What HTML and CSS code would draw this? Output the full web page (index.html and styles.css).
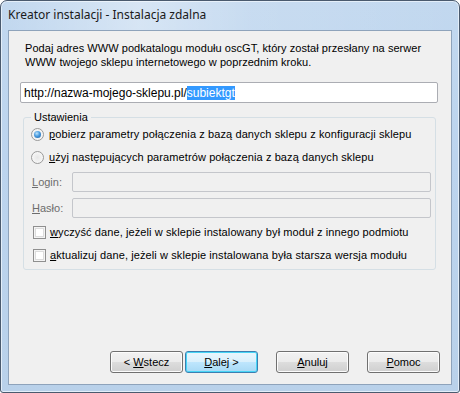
FILE: index.html
```html
<!DOCTYPE html>
<html lang="pl">
<head>
<meta charset="utf-8">
<title>Kreator instalacji</title>
<link rel="stylesheet" href="styles.css">
</head>
<body>
<div class="window">
  <div class="titlebar">Kreator instalacji - Instalacja zdalna</div>
  <div class="client">
    <p class="intro">Podaj adres WWW podkatalogu modułu oscGT, który został przesłany na serwer WWW twojego sklepu internetowego w poprzednim kroku.</p>
    <div class="textbox url">http://nazwa-mojego-sklepu.pl/<span class="sel">subiektgt</span></div>
    <div class="group">
      <div class="legend">Ustawienia</div>
      <div class="opt radio-row"><span class="radio checked"></span><span><u>p</u>obierz parametry połączenia z bazą danych sklepu z konfiguracji sklepu</span></div>
      <div class="opt radio-row r2"><span class="radio"></span><span><u>u</u>żyj następujących parametrów połączenia z bazą danych sklepu</span></div>
      <div class="field f1"><span class="lbl"><u>L</u>ogin:</span><span class="textbox disabled"></span></div>
      <div class="field f2"><span class="lbl"><u>H</u>asło:</span><span class="textbox disabled"></span></div>
      <div class="opt check-row c1"><span class="check"></span><span><u>w</u>yczyść dane, jeżeli w sklepie instalowany był moduł z innego podmiotu</span></div>
      <div class="opt check-row c2"><span class="check"></span><span><u>a</u>ktualizuj dane, jeżeli w sklepie instalowana była starsza wersja modułu</span></div>
    </div>
    <div class="buttons">
      <span class="btn"><span>&lt; <u>W</u>stecz</span></span>
      <span class="btn default"><span><u>D</u>alej &gt;</span></span>
      <span class="btn gap"><span><u>A</u>nuluj</span></span>
      <span class="btn gap"><span><u>P</u>omoc</span></span>
    </div>
  </div>
</div>
</body>
</html>
```

FILE: styles.css
```css
* { box-sizing: border-box; }
html, body { margin: 0; padding: 0; background: #fff; }
body {
  font-family: "Liberation Sans", Arial, sans-serif;
  font-size: 11px;
  color: #000;
}
.window {
  width: 460px;
  height: 393px;
  border: 1px solid #4a5a6e;
  border-radius: 7px 7px 3px 3px;
  background: linear-gradient(180deg, #c2d8ef 0%, #bcd4ee 40%, #b9d1ea 100%);
  display: flex;
  flex-direction: column;
  box-shadow: inset 0 0 0 1px #e3eef9;
}
.titlebar {
  height: 29px;
  padding: 6px 0 0 7px;
  font-family: "Noto Sans", "Open Sans", sans-serif;
  font-size: 12px;
  line-height: 16px;
  color: #1a1a1a;
  background: linear-gradient(90deg, rgba(255,255,255,0.0) 0%, rgba(255,255,255,0.35) 30%, rgba(255,255,255,0.1) 55%, rgba(255,255,255,0.0) 100%);
  border-radius: 6px 6px 0 0;
}
.client {
  flex: 1;
  margin: 0 7px 7px 7px;
  border: 1px solid #8ea3bb;
  background: #f0f0f0;
  display: flex;
  flex-direction: column;
  padding: 0 0 11px 0;
}
.intro {
  margin: 0;
  padding: 10px 16px 0 16px;
  line-height: 14px;
  letter-spacing: 0.05px;
}
.textbox {
  display: block;
  background: #fff;
  border: 1px solid #abadb3;
  border-radius: 2px;
}
.url {
  margin: 13px 0 0 11px;
  width: 418px;
  height: 21px;
  padding: 3px 0 0 3px;
  font-size: 12px;
  line-height: 14px;
  color: #000;
}
.sel {
  background: #3399ff;
  color: #fff;
}
.group {
  margin: 14px 0 0 14px;
  width: 413px;
  height: 153px;
  border: 1px solid #d5dfe5;
  border-radius: 3px;
  position: relative;
  padding: 8px 0 0 7px;
}
.legend {
  position: absolute;
  top: -8px;
  left: 7px;
  padding: 0 3px;
  background: #f0f0f0;
  line-height: 14px;
}
.opt {
  display: flex;
  align-items: center;
  gap: 5px;
  height: 16px;
  line-height: 13px;
  letter-spacing: 0.1px;
}
.r2 { margin-top: 7px; }
.radio {
  width: 13px;
  height: 13px;
  border-radius: 50%;
  border: 1px solid #9a9a9a;
  background: radial-gradient(circle at 50% 50%, #e6e6e6 0%, #f4f4f4 60%, #fafafa 100%);
  position: relative;
  flex: none;
}
.radio.checked::after {
  content: "";
  position: absolute;
  left: 2px;
  top: 2px;
  width: 7px;
  height: 7px;
  border-radius: 50%;
  background: radial-gradient(circle at 40% 35%, #bfe4fb 0%, #4a9ce0 45%, #1d5c9c 100%);
}
.field {
  display: flex;
  align-items: center;
  height: 20px;
  padding-left: 1px;
}
.f1 { margin-top: 7px; }
.f2 { margin-top: 6px; }
.lbl {
  width: 40px;
  color: #6d6d6d;
}
.textbox.disabled {
  flex: none;
  width: 359px;
  height: 20px;
  background: #f0f0f0;
  border-color: #c4c6cb;
}
.check-row { padding-left: 2px; gap: 4px; }
.c1 { margin-top: 6px; }
.c2 { margin-top: 7px; }
.check {
  width: 13px;
  height: 13px;
  border: 1px solid #8f8f8f;
  background: #fff;
  box-shadow: inset 0 0 0 1px #f4f4f4, inset 0 0 0 2px #dcdcdc;
  flex: none;
}
.buttons {
  margin-top: auto;
  display: flex;
  padding-left: 101px;
  gap: 2px;
}
.btn {
  flex: none;
  width: 73px;
  height: 22px;
  border: 1px solid #707070;
  border-radius: 3px;
  background: linear-gradient(180deg, #f2f2f2 0%, #ebebeb 50%, #dddddd 51%, #cfcfcf 100%);
  box-shadow: inset 0 0 0 1px #fcfcfc;
  display: flex;
  align-items: center;
  justify-content: center;
  line-height: 13px;
}
.btn.default {
  border-color: #3c7fb1;
  background: linear-gradient(180deg, #eaf6fd 0%, #d9f0fc 50%, #bee6fd 51%, #a7d9f5 100%);
  box-shadow: inset 0 0 0 1px #48d5f6;
}
.btn.gap { margin-left: 16px; }
```
